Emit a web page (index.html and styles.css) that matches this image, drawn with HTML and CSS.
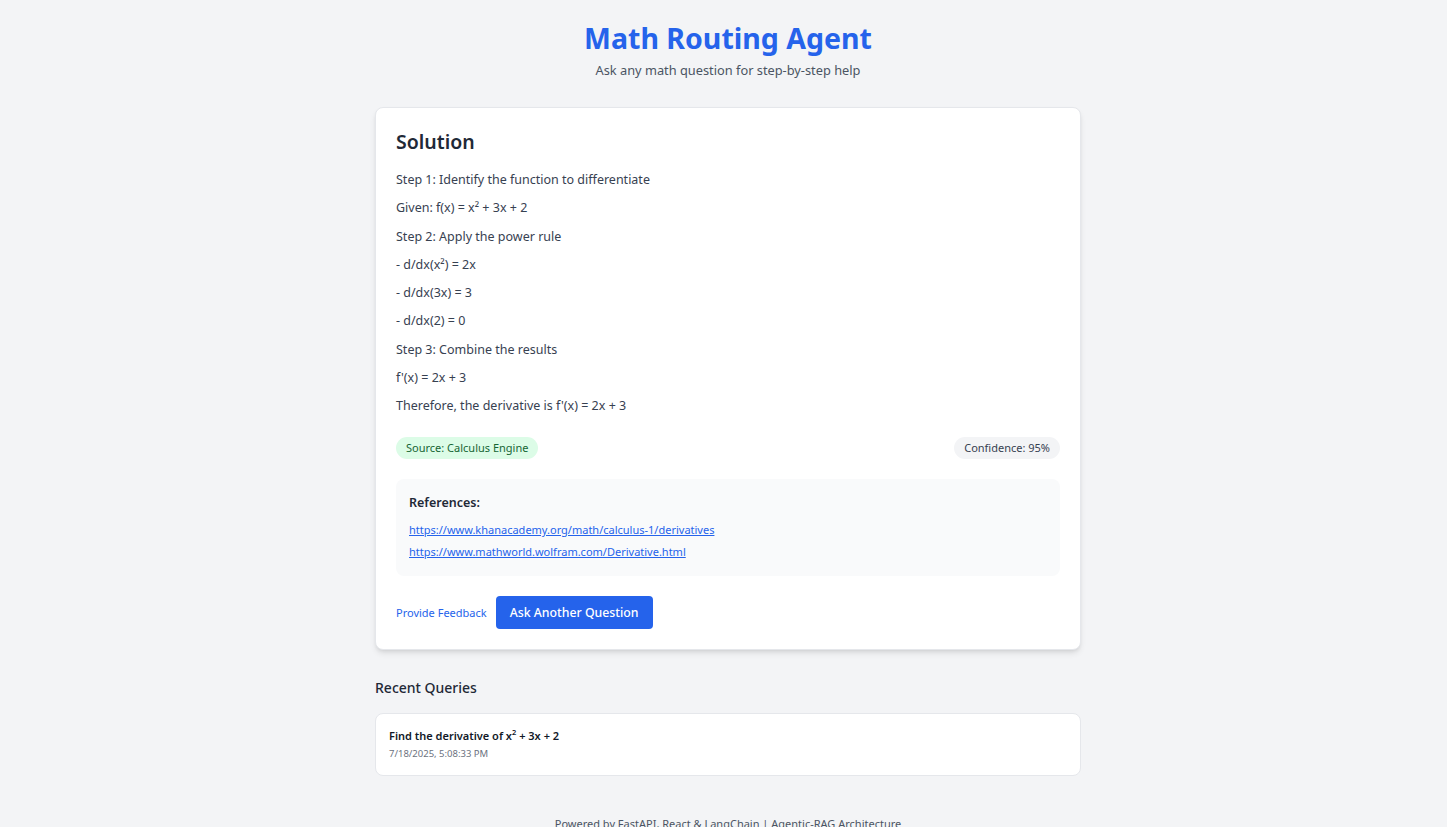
FILE: index.html
```html
<!DOCTYPE html>
<html lang="en">
<head>
<meta charset="utf-8">
<title>Math Routing Agent</title>
<link rel="stylesheet" href="styles.css">
</head>
<body>
<div class="page">
  <header class="header">
    <h1 class="title">Math Routing Agent</h1>
    <p class="subtitle">Ask any math question for step-by-step help</p>
  </header>

  <main class="main">
    <section class="card">
      <h2 class="card-title">Solution</h2>
      <div class="steps">
        <p>Step 1: Identify the function to differentiate</p>
        <p>Given: f(x) = x² + 3x + 2</p>
        <p>Step 2: Apply the power rule</p>
        <p>- d/dx(x²) = 2x</p>
        <p>- d/dx(3x) = 3</p>
        <p>- d/dx(2) = 0</p>
        <p>Step 3: Combine the results</p>
        <p>f'(x) = 2x + 3</p>
        <p>Therefore, the derivative is f'(x) = 2x + 3</p>
      </div>
      <div class="meta">
        <span class="badge badge-green">Source: Calculus Engine</span>
        <span class="badge badge-gray">Confidence: 95%</span>
      </div>
      <div class="refs">
        <h3 class="refs-title">References:</h3>
        <a class="ref-link" href="#">https://www.khanacademy.org/math/calculus-1/derivatives</a>
        <a class="ref-link" href="#">https://www.mathworld.wolfram.com/Derivative.html</a>
      </div>
      <div class="actions">
        <a class="feedback" href="#">Provide Feedback</a>
        <button class="btn">Ask Another Question</button>
      </div>
    </section>

    <section class="recent">
      <h2 class="recent-title">Recent Queries</h2>
      <div class="query">
        <div class="query-text">Find the derivative of x<sup>2</sup> + 3x + 2</div>
        <div class="query-date">7/18/2025, 5:08:33 PM</div>
      </div>
    </section>
  </main>

  <footer class="footer">Powered by FastAPI, React &amp; LangChain | Agentic-RAG Architecture</footer>
</div>
</body>
</html>
```

FILE: styles.css
```css
* { box-sizing: border-box; }
html, body { margin: 0; padding: 0; }
body {
  background: #f3f4f6;
  font-family: "Noto Sans", "Open Sans", sans-serif;
  color: #1f2937;
}
.page {
  padding: 18px 0 0 9px;
}
.header {
  text-align: center;
}
.title {
  margin: 0;
  font-size: 28.5px;
  line-height: 40px;
  font-weight: 700;
  color: #2563eb;
}
.subtitle {
  margin: 2px 0 0;
  font-size: 12.8px;
  line-height: 20px;
  color: #4b5563;
}
.main {
  width: 706px;
  margin: 27px auto 0;
}
.card {
  background: #fff;
  border-radius: 8px;
  border: 1px solid #e5e7eb;
  box-shadow: 0 4px 6px -1px rgba(0,0,0,0.1), 0 2px 4px -2px rgba(0,0,0,0.1);
  padding: 20px 20px 20px;
}
.card-title {
  margin: 0 0 10px;
  font-size: 19.5px;
  line-height: 28px;
  font-weight: 600;
  color: #1f2937;
}
.steps p {
  margin: 0;
  font-size: 12.5px;
  line-height: 28.25px;
  color: #374151;
}
.meta {
  display: flex;
  justify-content: space-between;
  align-items: center;
  margin-top: 17px;
}
.badge {
  display: inline-block;
  font-size: 11px;
  line-height: 22px;
  padding: 0 10px;
  border-radius: 999px;
}
.badge-green { background: #dcfce7; color: #166534; }
.badge-gray { background: #f3f4f6; color: #374151; }
.refs {
  margin-top: 20px;
  background: #f9fafb;
  border-radius: 8px;
  padding: 14px 13px 13px;
  display: flex;
  flex-direction: column;
  align-items: flex-start;
}
.refs-title {
  margin: 0 0 6px;
  font-size: 12.5px;
  line-height: 20px;
  font-weight: 600;
  color: #1f2937;
}
.ref-link {
  font-size: 11px;
  line-height: 22px;
  color: #2563eb;
  text-decoration: underline;
}
.actions {
  display: flex;
  align-items: center;
  gap: 9px;
  margin-top: 20px;
}
.feedback {
  font-size: 11px;
  color: #2563eb;
  text-decoration: none;
}
.btn {
  font-family: inherit;
  font-size: 12.3px;
  font-weight: 500;
  color: #fff;
  background: #2563eb;
  border: none;
  border-radius: 4px;
  height: 33px;
  padding: 0 14px;
}
.recent {
  margin-top: 27px;
}
.recent-title {
  margin: 0 0 14px;
  font-size: 14px;
  line-height: 22px;
  font-weight: 500;
  color: #1f2937;
}
.query {
  background: #fff;
  border: 1px solid #e5e7eb;
  border-radius: 8px;
  padding: 13px 13px 12px;
}
.query-text {
  font-size: 11px;
  line-height: 18px;
  font-weight: 600;
  color: #111827;
}
.query-text sup {
  font-size: 7.5px;
  line-height: 0;
}
.query-date {
  font-size: 9.5px;
  line-height: 18px;
  color: #6b7280;
}
.footer {
  text-align: center;
  margin-top: 40px;
  font-size: 11px;
  line-height: 16px;
  color: #4b5563;
  padding-bottom: 20px;
}
```
